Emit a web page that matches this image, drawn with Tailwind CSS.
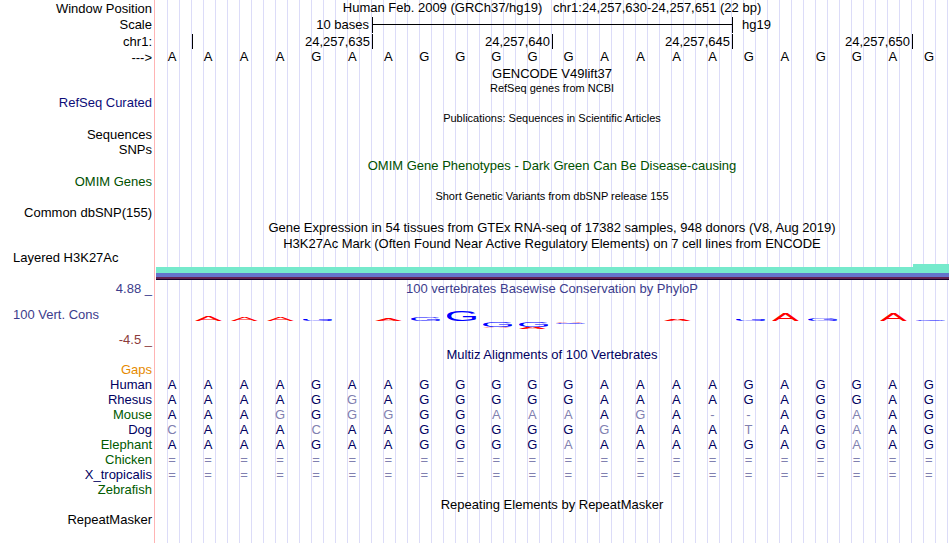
<!DOCTYPE html>
<html lang="en">
  <head>
    <meta charset="UTF-8" />
    <meta name="viewport" content="width=device-width, initial-scale=1.0" />
    <script src="https://cdn.jsdelivr.net/npm/@tailwindcss/browser@4"></script>
    <title>chr1:24,257,630-24,257,651 - Genome Browser</title>
  </head>
  <body class="bg-white min-h-screen">
    <main
      class="relative min-h-screen font-['Liberation_Sans',Arial,sans-serif] text-[13px] leading-[15px] text-black whitespace-nowrap"
    >
      <!-- guide lines -->
      <div
        class="absolute inset-y-0 left-[154px] right-0 border-l border-[#ffb4b4] pl-3"
        aria-hidden="true"
      >
        <div
          class="h-full bg-[repeating-linear-gradient(to_right,#dcdcf8_0px,#dcdcf8_1px,transparent_1px,transparent_12px)]"
        ></div>
      </div>

      <div class="relative">
        <!-- position and ruler -->
        <div class="flex h-4">
          <div class="flex w-[154px] shrink-0 items-center justify-end pr-0.5">Window Position</div>
          <h1 class="flex-1 text-center">
            Human Feb. 2009 (GRCh37/hg19)&nbsp;&nbsp; chr1:24,257,630-24,257,651 (22 bp)
          </h1>
        </div>
        <div class="flex h-[17px] items-center">
          <div class="w-[154px] shrink-0 pr-0.5 text-right">Scale</div>
          <div class="grid flex-1 grid-cols-22 items-center pl-[3px] pr-px">
            <div class="col-span-6 pr-1 text-right">10 bases</div>
            <div class="col-span-10 -ml-px flex h-4 items-center border-x border-black">
              <div class="h-px w-full bg-black"></div>
            </div>
            <div class="col-span-6 pl-[9px]">hg19</div>
          </div>
        </div>
        <div class="flex h-4 items-center">
          <div class="w-[154px] shrink-0 pr-0.5 text-right">chr1:</div>
          <div class="grid h-[15px] flex-1 grid-cols-22 pl-[3px] pr-px text-right">
            <div class="col-span-1 border-r border-black"></div>
            <div class="col-span-5 border-r border-black pr-0.5">24,257,635</div>
            <div class="col-span-5 border-r border-black pr-0.5">24,257,640</div>
            <div class="col-span-5 border-r border-black pr-0.5">24,257,645</div>
            <div class="col-span-5 border-r border-black pr-0.5">24,257,650</div>
          </div>
        </div>
        <div class="flex h-4">
          <div class="flex w-[154px] shrink-0 items-end justify-end pr-0.5">---&gt;</div>
          <div id="bases" class="grid flex-1 grid-cols-22 pr-[3px] text-center"></div>
        </div>

        <!-- gene and variant tracks -->
        <h2 class="flex h-4 items-center justify-center pl-[154px]">GENCODE V49lift37</h2>
        <h2 class="flex h-[14px] items-center justify-center pl-[154px] text-[11px]">
          RefSeq genes from NCBI
        </h2>
        <div class="flex h-[15px] w-[154px] items-center justify-end pr-0.5 text-[#0c0c78]">
          RefSeq Curated
        </div>
        <h2 class="flex h-[17px] items-center justify-center pl-[154px] text-[11px]">
          Publications: Sequences in Scientific Articles
        </h2>
        <div class="flex h-[14px] w-[154px] items-center justify-end pr-0.5">Sequences</div>
        <div class="flex h-4 w-[154px] items-center justify-end pr-0.5">SNPs</div>
        <h2 class="flex h-[17px] items-center justify-center pl-[154px] text-[#005000]">
          OMIM Gene Phenotypes - Dark Green Can Be Disease-causing
        </h2>
        <div class="flex h-[14px] w-[154px] items-center justify-end pr-0.5 text-[#005000]">
          OMIM Genes
        </div>
        <h2 class="flex h-[17px] items-center justify-center pl-[154px] text-[11px]">
          Short Genetic Variants from dbSNP release 155
        </h2>
        <div class="flex h-[14px] w-[154px] items-center justify-end pr-0.5">
          Common dbSNP(155)
        </div>

        <!-- expression and regulation -->
        <h2 class="flex h-[17px] items-center justify-center pl-[154px]">
          Gene Expression in 54 tissues from GTEx RNA-seq of 17382 samples, 948 donors (V8, Aug 2019)
        </h2>
        <h2 class="flex h-[14px] items-center justify-center pl-[154px]">
          H3K27Ac Mark (Often Found Near Active Regulatory Elements) on 7 cell lines from ENCODE
        </h2>
        <div class="flex h-[14px] items-center pl-[13px]">Layered H3K27Ac</div>
        <div class="pl-[156px] pr-px">
          <div class="flex h-[3px] justify-end">
            <div class="w-9 bg-[#76eacc]"></div>
          </div>
          <div class="h-1.5 bg-[#76eacc]"></div>
          <div class="h-1 bg-[#6474cc]"></div>
          <div class="h-0.5 bg-[#642452]"></div>
          <div class="h-px bg-[#140028]"></div>
        </div>

        <!-- conservation -->
        <div class="flex h-[17px] items-center text-[#3c3c8c]">
          <div class="w-[154px] shrink-0 pr-0.5 text-right">4.88 _</div>
          <h2 class="flex-1 text-center">100 vertebrates Basewise Conservation by PhyloP</h2>
        </div>
        <div class="flex h-[34px] items-center">
          <div class="w-[154px] shrink-0 pl-[13px] text-[#3c3c8c]">100 Vert. Cons</div>
          <div id="phylop" class="grid h-full flex-1 grid-cols-22 pr-[3px]"></div>
        </div>
        <div class="flex h-4 w-[154px] items-center justify-end pr-0.5 text-[#8c3c3c]">
          -4.5 _
        </div>

        <!-- alignment -->
        <h2 class="flex h-[15px] items-center justify-center pl-[154px] text-[#00005f]">
          Multiz Alignments of 100 Vertebrates
        </h2>
        <div class="flex h-[15px] w-[154px] items-center justify-end pr-0.5 text-[#e68a00]">
          Gaps
        </div>
        <div class="pr-[3px]">
          <table class="w-full table-fixed border-collapse">
            <colgroup>
              <col class="w-[154px]" />
              <col span="22" />
            </colgroup>
            <tbody id="multiz"></tbody>
          </table>
        </div>

        <!-- repeats -->
        <h2 class="flex h-[15px] items-center justify-center pl-[154px]">
          Repeating Elements by RepeatMasker
        </h2>
        <div class="flex h-[15px] w-[154px] items-center justify-end pr-0.5">RepeatMasker</div>
      </div>
    </main>

    <script>
      const reference = "AAAAGAAGGGGGAAAAGAGGAG";

      const species = [
        ["Human", "text-[#00005f]", "AAAAGAAGGGGGAAAAGAGGAG"],
        ["Rhesus", "text-[#00005f]", "AAAAGGAGGGGGAAAAGAGGAG"],
        ["Mouse", "text-[#005a00]", "AAAGGGGGGAAAAGA--AGAAG"],
        ["Dog", "text-[#00005f]", "CAAACAAGGGGGGAAATAGAAG"],
        ["Elephant", "text-[#005a00]", "AAAAGAAGGGGAAAAAGAGAAG"],
        ["Chicken", "text-[#005a00]", "======================"],
        ["X_tropicalis", "text-[#00005f]", "======================"],
        ["Zebrafish", "text-[#005a00]", "                      "],
      ];

      // per base: [letter, height] above the zero line, then below it
      const scores = {
        1: { up: [["A", 5]] },
        2: { up: [["A", 4]] },
        3: { up: [["A", 4]] },
        4: { up: [["G", 2]] },
        6: { up: [["A", 3]] },
        7: { up: [["G", 4]] },
        8: { up: [["G", 10]] },
        9: { down: [["G", 5], ["A", 1]] },
        10: { down: [["G", 5], ["A", 2]] },
        11: { down: [["A", 1], ["G", 1]] },
        14: { up: [["A", 2]] },
        16: { up: [["G", 2]] },
        17: { up: [["A", 8]] },
        18: { up: [["G", 3]] },
        20: { up: [["A", 8]] },
        21: { up: [["G", 1]] },
      };

      document.getElementById("bases").innerHTML = [...reference]
        .map((base) => `<span>${base}</span>`)
        .join("");

      document.getElementById("multiz").innerHTML = species
        .map(([name, color, seq]) => {
          const cells = [...seq]
            .map((base, i) => {
              const shade = base === reference[i] ? "text-[#00005f]" : "text-[#8080b0]";
              return `<td class="p-0 text-center ${shade}">${base}</td>`;
            })
            .join("");
          return `<tr class="h-[15px]"><th scope="row" class="p-0 pr-0.5 text-right font-normal ${color}">${name}</th>${cells}</tr>`;
        })
        .join("");

      // logo letters: the height of each one is its score
      function logo([letter, height]) {
        const isA = letter === "A";
        const box = isA ? "0 0 67 69" : "5 -1 68 71";
        const look = isA ? "w-[27px] fill-[#ff0000]" : "w-[30px] fill-[#0000ff]";
        return `<svg class="shrink-0 ${look}" style="height:${height}px" viewBox="${box}" preserveAspectRatio="none"><text y="69" font-size="100">${letter}</text></svg>`;
      }

      document.getElementById("phylop").innerHTML = [...reference]
        .map((_, i) => {
          const { up = [], down = [] } = scores[i] || {};
          return `<div class="pl-[5px]"><div class="flex h-6 flex-col justify-end">${up.map(logo).join("")}</div><div class="flex flex-col pt-px">${down.map(logo).join("")}</div></div>`;
        })
        .join("");
    </script>
  </body>
</html>
